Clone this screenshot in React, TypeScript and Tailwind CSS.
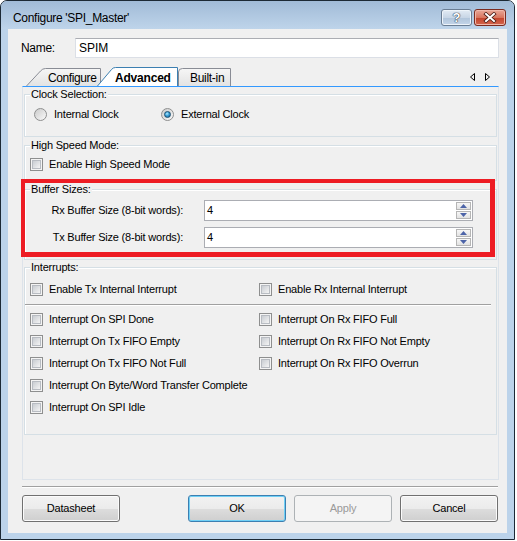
import React from "react";

function Check() {
  return (
    <span className="w-[13px] h-[13px] shrink-0 flex border border-[#8e8f8f] bg-[#f4f4f4] p-[1px]">
      <span className="flex-1 border border-[#b8bcc2] bg-gradient-to-br from-[#c9cdd2] to-[#f4f4f4]" />
    </span>
  );
}

function Radio({ checked }: { checked?: boolean }) {
  return (
    <span className="w-[13px] h-[13px] shrink-0 rounded-full border border-[#8e8f8f] bg-gradient-to-br from-[#cbcbcb] to-[#fafafa] flex items-center justify-center">
      {checked ? (
        <span className="w-[7px] h-[7px] rounded-full border border-[#1b4f72] bg-[radial-gradient(circle_at_40%_35%,#b4ecff_0%,#3aa0d8_45%,#125a8c_100%)]" />
      ) : null}
    </span>
  );
}

function CheckRow({ label }: { label: string }) {
  return (
    <div className="h-[22px] flex items-center">
      <Check />
      <span className="ml-[6px] text-[11px] leading-[13px] tracking-[-0.2px] whitespace-nowrap">{label}</span>
    </div>
  );
}

function Group({
  label,
  className,
  children,
}: {
  label: string;
  className: string;
  children?: React.ReactNode;
}) {
  return (
    <div className={"relative ml-[1px] w-[473px] border border-[#d5dfe5] shadow-[inset_1px_1px_0_#ffffff] " + className}>
      <span className="absolute -top-[7px] left-[5px] px-[1px] bg-[#f0f0f0] text-[11px] leading-[13px] tracking-[-0.2px] whitespace-nowrap">
        {label}
      </span>
      {children}
    </div>
  );
}

function SpinInput({ value }: { value: string }) {
  return (
    <div className="relative ml-[21px] w-[269px] h-[21px] border border-[#abadb3] bg-white flex items-center">
      <span className="pl-[2px] text-[11px] leading-[13px]">{value}</span>
      <div className="absolute right-[1px] top-[1px] bottom-[1px] w-[15px] flex flex-col gap-[1px]">
        <div className="flex-1 border border-[#b5b5b5] bg-gradient-to-b from-[#f7f7f7] to-[#e2e2e2] flex items-center justify-center">
          <svg width="7" height="4" viewBox="0 0 7 4">
            <path d="M0 4 L3.5 0 L7 4 Z" fill="#4d64a8" />
          </svg>
        </div>
        <div className="flex-1 border border-[#b5b5b5] bg-gradient-to-b from-[#f7f7f7] to-[#e2e2e2] flex items-center justify-center">
          <svg width="7" height="4" viewBox="0 0 7 4">
            <path d="M0 0 L3.5 4 L7 0 Z" fill="#4d64a8" />
          </svg>
        </div>
      </div>
    </div>
  );
}

function Btn({ label, kind }: { label: string; kind?: "default" | "disabled" }) {
  if (kind === "disabled") {
    return (
      <div className="w-[98px] h-[27px] rounded-[3px] border border-[#adb2b5] bg-[#f4f4f4] flex items-center justify-center text-[11px] tracking-[-0.2px] text-[#9a9a9a]">
        {label}
      </div>
    );
  }
  if (kind === "default") {
    return (
      <div className="w-[98px] h-[27px] rounded-[3px] border border-[#3c7fb1] shadow-[inset_0_0_0_1px_#6fd0f6] bg-[linear-gradient(#f2f2f2_0%,#ebebeb_50%,#dddddd_51%,#cfcfcf_100%)] flex items-center justify-center text-[11px] tracking-[-0.2px]">
        {label}
      </div>
    );
  }
  return (
    <div className="w-[98px] h-[27px] rounded-[3px] border border-[#707070] shadow-[inset_0_0_0_1px_#fbfbfb] bg-[linear-gradient(#f2f2f2_0%,#ebebeb_50%,#dddddd_51%,#cfcfcf_100%)] flex items-center justify-center text-[11px] tracking-[-0.2px]">
      {label}
    </div>
  );
}

export default function App() {
  return (
    <div className="w-[517px] h-[541px] bg-white font-['Liberation_Sans',Arial,sans-serif] text-black">
      <div className="w-[515px] h-[540px] flex flex-col border border-[#1c2935] rounded-t-[7px] overflow-hidden bg-[#bcd3ea]">
        {/* Title bar */}
        <div className="h-[28px] shrink-0 flex bg-gradient-to-b from-[#a1bbd7] to-[#bed4ea]">
          <div className="pl-[12px] pt-[10px] text-[12px] leading-[14px] tracking-[-0.3px] whitespace-nowrap">
            Configure 'SPI_Master'
          </div>
          <div className="ml-auto mt-[8px] mr-[8px] flex gap-[2px] h-[17px]">
            <div className="w-[31px] h-[17px] rounded-[3px] border border-[#6a7d93] bg-[linear-gradient(#e3ebf4_0%,#c8d6e6_50%,#b0c4da_51%,#c4d6ea_100%)] shadow-[inset_0_0_0_1px_#eef4fa] flex items-center justify-center">
              <span className="text-[13px] leading-[13px] font-bold text-white [text-shadow:0_0_1px_#2d3a4a,0_0_1px_#2d3a4a,0_0_1px_#2d3a4a]">?</span>
            </div>
            <div className="w-[32px] h-[17px] rounded-[3px] border border-[#7c2b1f] bg-[linear-gradient(#e9a899_0%,#d9765f_50%,#c2432b_51%,#d4664e_100%)] shadow-[inset_0_0_0_1px_#f0b8aa] flex items-center justify-center">
              <svg width="14" height="11" viewBox="0 0 14 11">
                <path d="M3 2 L11 9 M11 2 L3 9" stroke="#4a1a12" strokeWidth="3.6" strokeLinecap="square" />
                <path d="M3 2 L11 9 M11 2 L3 9" stroke="#ffffff" strokeWidth="2" strokeLinecap="square" />
              </svg>
            </div>
          </div>
        </div>

        {/* Body */}
        <div className="flex-1 px-[7px] pb-[6px] flex">
          <div className="flex-1 bg-[#f0f0f0] flex flex-col">
            {/* Name row */}
            <div className="mt-[9px] h-[20px] flex items-center pl-[13px]">
              <span className="w-[54px] text-[12px] leading-[14px] tracking-[-0.3px]">Name:</span>
              <div className="w-[424px] h-[20px] border border-[#dbdfe6] border-t-[#abadb3] bg-white flex items-center pl-[3px] text-[12px] leading-[14px]">
                SPIM
              </div>
            </div>

            {/* Tabs row */}
            <div className="mt-[9px] ml-[14px] mr-[8px] h-[19px] flex">
              <div className="relative w-[75px] h-[19px] ml-[4px]">
                <svg className="absolute inset-0" width="75" height="19" viewBox="0 0 75 19">
                  <defs>
                    <linearGradient id="tgA" x1="0" y1="0" x2="0" y2="1">
                      <stop offset="0" stopColor="#f6f6f6" />
                      <stop offset="1" stopColor="#e3e3e3" />
                    </linearGradient>
                  </defs>
                  <path d="M0.5 19 L14.5 4 Q16.5 1.5 19.5 1.5 L74.5 1.5 L74.5 19" fill="url(#tgA)" stroke="#898c95" />
                </svg>
                <span className="relative block pl-[22px] pt-[4px] text-[12px] leading-[14px] tracking-[-0.4px]">Configure</span>
              </div>
              <div className="relative z-10 w-[81px] h-[19px] -ml-[4px]">
                <svg className="absolute inset-0" width="81" height="19" viewBox="0 0 81 19">
                  <path d="M0.5 19 L14.5 2.5 Q16 0.5 18.5 0.5 L80.5 0.5 L80.5 19" fill="#ffffff" stroke="#3c7fb1" />
                </svg>
                <span className="relative block pl-[18px] pt-[4px] text-[12px] leading-[14px] font-bold tracking-[-0.2px]">Advanced</span>
              </div>
              <div className="relative w-[53px] h-[19px]">
                <svg className="absolute inset-0" width="53" height="19" viewBox="0 0 53 19">
                  <path d="M0.5 19 L0.5 5 Q0.5 1.5 4.5 1.5 L52.5 1.5 L52.5 19" fill="url(#tgA)" stroke="#898c95" />
                </svg>
                <span className="relative block pl-[12px] pt-[4px] text-[12px] leading-[14px] tracking-[-0.3px]">Built-in</span>
              </div>
              <svg className="ml-auto mr-[9px] mt-[6px]" width="20" height="8" viewBox="0 0 20 8">
                <path d="M4.5 0.5 L0.5 4 L4.5 7.5 Z" fill="none" stroke="#000000" />
                <path d="M15.5 0.5 L19.5 4 L15.5 7.5 Z" fill="none" stroke="#000000" />
              </svg>
            </div>

            {/* Tab panel */}
            <div className="relative ml-[14px] w-[477px] h-[394px] border border-[#dde3ea] border-t-[#3399ff] flex flex-col">
              <Group label="Clock Selection:" className="mt-[7px] h-[43px] pt-[13px] pl-[9px]">
                <div className="flex h-[13px] items-center">
                  <div className="w-[127px] flex items-center">
                    <Radio />
                    <span className="ml-[7px] text-[11px] leading-[13px] tracking-[-0.2px]">Internal Clock</span>
                  </div>
                  <div className="flex items-center">
                    <Radio checked />
                    <span className="ml-[7px] text-[11px] leading-[13px] tracking-[-0.2px]">External Clock</span>
                  </div>
                </div>
              </Group>

              <Group label="High Speed Mode:" className="mt-[8px] h-[36px] pt-[12px] pl-[5px]">
                <div className="flex h-[13px] items-center">
                  <Check />
                  <span className="ml-[6px] text-[11px] leading-[13px] tracking-[-0.2px]">Enable High Speed Mode</span>
                </div>
              </Group>

              <Group label="Buffer Sizes:" className="mt-[8px] h-[71px] pt-[10px]">
                <div className="flex flex-col gap-[6px]">
                  <div className="flex items-center h-[21px]">
                    <span className="w-[158px] text-right text-[11px] leading-[13px] tracking-[-0.2px] whitespace-nowrap">
                      Rx Buffer Size (8-bit words):
                    </span>
                    <SpinInput value="4" />
                  </div>
                  <div className="flex items-center h-[21px]">
                    <span className="w-[158px] text-right text-[11px] leading-[13px] tracking-[-0.2px] whitespace-nowrap">
                      Tx Buffer Size (8-bit words):
                    </span>
                    <SpinInput value="4" />
                  </div>
                </div>
              </Group>

              <Group label="Interrupts:" className="mt-[7px] h-[168px] pt-[10px] pl-[5px]">
                <div className="flex">
                  <div className="w-[229px]">
                    <CheckRow label="Enable Tx Internal Interrupt" />
                  </div>
                  <div>
                    <CheckRow label="Enable Rx Internal Interrupt" />
                  </div>
                </div>
                <div className="mt-[4px] w-[466px] h-[2px] border-t border-[#a0a0a0] border-b border-b-white -ml-[5px]" />
                <div className="mt-[2px] flex">
                  <div className="w-[229px] flex flex-col">
                    <CheckRow label="Interrupt On SPI Done" />
                    <CheckRow label="Interrupt On Tx FIFO Empty" />
                    <CheckRow label="Interrupt On Tx FIFO Not Full" />
                    <CheckRow label="Interrupt On Byte/Word Transfer Complete" />
                    <CheckRow label="Interrupt On SPI Idle" />
                  </div>
                  <div className="flex flex-col">
                    <CheckRow label="Interrupt On Rx FIFO Full" />
                    <CheckRow label="Interrupt On Rx FIFO Not Empty" />
                    <CheckRow label="Interrupt On Rx FIFO Overrun" />
                  </div>
                </div>
              </Group>

              {/* red annotation box */}
              <div className="absolute -left-[2px] top-[92px] w-[474px] h-[78px] border-[4px] border-r-[5px] border-b-[5px] border-[#ed1c24]" />
            </div>

            {/* Separator */}
            <div className="mt-[6px] ml-[14px] w-[476px] h-[2px] border-t border-[#a0a0a0] border-b border-b-white" />

            {/* Buttons */}
            <div className="mt-[7px] ml-[14px] w-[476px] h-[27px] flex justify-between">
              <Btn label="Datasheet" />
              <div className="flex gap-[8px]">
                <Btn label="OK" kind="default" />
                <Btn label="Apply" kind="disabled" />
                <Btn label="Cancel" />
              </div>
            </div>
          </div>
        </div>
      </div>
    </div>
  );
}
